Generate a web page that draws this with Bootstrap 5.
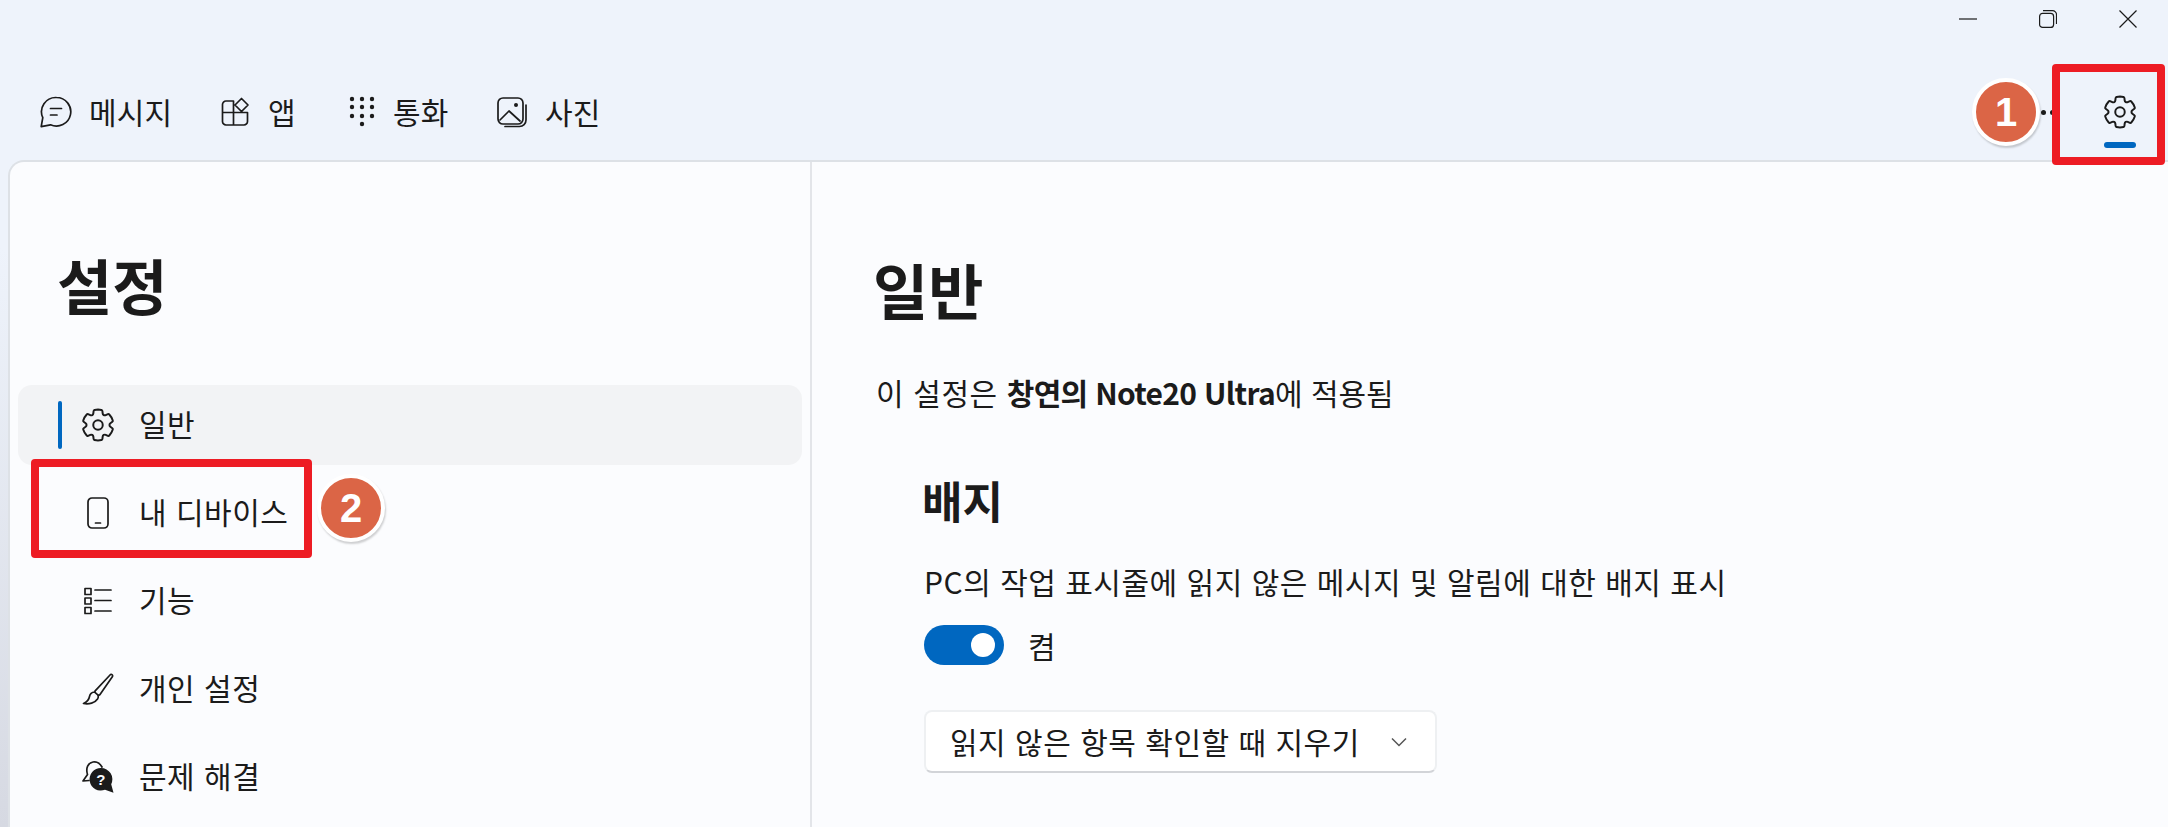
<!DOCTYPE html>
<html lang="ko">

<head>
    <meta charset="UTF-8">
    <meta name="viewport" content="width=device-width, initial-scale=1.0">
    <title>휴대폰과 연결 설정</title>
    <link href="https://cdn.jsdelivr.net/npm/bootstrap@5.3.0/dist/css/bootstrap.min.css" rel="stylesheet">
    <style>
        body {
            height: 827px;
            overflow: hidden;
            background: linear-gradient(180deg, #eef3fb 0%, #eef3fb 30%, #d6d9e2 100%);
            color: #1b1b1b;
            font-family: "Noto Sans CJK KR", "Noto Sans", sans-serif;
            font-size: 30px;
            letter-spacing: .5px;
        }

        svg { display: block; flex: none; }

        .line-icon {
            fill: none;
            stroke: #1b1b1b;
            stroke-width: 1.7;
            stroke-linecap: round;
            stroke-linejoin: round;
        }
        .gear-line { stroke-width: 1.25; }

        /* Title bar */
        .win-bar { height: 64px; padding-right: 31px; gap: 62px; }
        .win-bar svg { margin-top: 10px; }

        /* Top tabs */
        .tab-bar { height: 96px; padding-left: 40px; }
        .tab-item { color: #1b1b1b; text-decoration: none; line-height: 32px; gap: 17px; letter-spacing: .1px; }
        .tab-item span { margin-top: -2px; }
        .tab-msg { width: 179px; }
        .tab-app { width: 125px; }
        .tab-call { width: 152px; }
        .gear-tab { width: 96px; height: 96px; }
        .gear-bar {
            position: absolute;
            left: 32px;
            top: 78px;
            width: 32px;
            height: 6px;
            border-radius: 3px;
            background: #0067c0;
        }
        .more-dots { margin-right: 17px; }
        .more-dots span {
            display: block;
            width: 5px;
            height: 5px;
            border-radius: 50%;
            background: #1b1b1b;
        }

        /* Annotations */
        .red-mark {
            position: absolute;
            border: 8px solid #ed1c24;
            border-radius: 4px;
            pointer-events: none;
        }
        .red-mark-gear { right: 3px; top: 0; width: 113px; height: 101px; }
        .red-mark-device { left: 13px; top: -14px; width: 281px; height: 99px; }
        .step-badge {
            position: absolute;
            width: 68px;
            height: 68px;
            border-radius: 50%;
            background: #db6546;
            border: 4px solid #fff;
            box-shadow: 1px 2px 2px rgba(0, 0, 0, .18);
            color: #fff;
            font: 700 40px/60px "Liberation Sans", sans-serif;
            letter-spacing: 0;
            text-align: center;
        }
        .step-gear { right: 128px; top: 14px; }
        .step-device { left: 299px; top: 1px; }

        /* Main panel */
        .main-panel {
            margin-left: 8px;
            height: 667px;
            background: #fbfcfe;
            border-top: 2px solid #dde1e6;
            border-left: 2px solid #dde1e6;
            border-top-left-radius: 16px;
        }
        .side-col {
            width: 802px;
            flex: none;
            border-right: 2px solid #e3e5e9;
            padding: 86px 8px 0;
        }
        .page-title {
            font-size: 60px;
            font-weight: 700;
            line-height: 72px;
            letter-spacing: 0;
            margin: 0;
        }
        .side-col .page-title { margin: 0 0 65px 39px; }
        .side-item {
            height: 80px;
            margin-bottom: 8px;
            padding-left: 64px;
            border-radius: 14px;
            color: #1b1b1b;
            text-decoration: none;
            gap: 25px;
        }
        .side-item span { margin-top: -3px; }
        .side-item.is-active { background: #f2f3f5; }
        .side-item.is-active::before {
            content: "";
            position: absolute;
            left: 40px;
            top: 16px;
            width: 4px;
            height: 48px;
            border-radius: 2px;
            background: #0067c0;
        }
        .side-icon { width: 32px; height: 32px; }
        .gear-size { width: 38px; height: 38px; margin: 0 -3px; }

        .content-col { padding: 91px 0 0 61px; }
        .applies-line { margin: 47px 0 0 3px; line-height: 40px; letter-spacing: .6px; }
        .applies-line b { letter-spacing: -.7px; }
        .applies-line span { letter-spacing: 0; }
        .badge-block { margin: 62px 0 0 49px; }
        .block-title { font-size: 44px; font-weight: 700; line-height: 53px; letter-spacing: 0; margin: 0; }
        .block-text { margin: 34px 0 0 2px; line-height: 40px; }

        .switch-line { margin: 24px 0 0 2px; height: 40px; gap: 24px; }
        .switch-line .form-switch .form-check-input,
        .switch-line .form-switch .form-check-input:checked {
            width: 80px;
            height: 40px;
            margin: 0;
            float: none;
            background-color: #0067c0;
            border: 0;
            background-size: 32px 32px;
            background-position: right 5px center;
        }
        .switch-line .form-check { padding: 0; margin: 0; min-height: 0; line-height: 0; }

        .pick-btn {
            margin: 45px 0 0 2px;
            width: 513px;
            height: 63px;
            padding: 0 27px 0 24px;
            background: #fff;
            border: 2px solid #eef0f2;
            border-bottom-color: #d2d4d8;
            border-radius: 8px;
            color: #1b1b1b;
            font-size: 30px;
            letter-spacing: .5px;
            white-space: nowrap;
        }
    </style>
</head>

<body>
    <svg width="0" height="0" style="position:absolute">
        <symbol id="ic-gear" viewBox="0 0 24 24">
            <path class="line-icon gear-line" d="M12.012 2.25c.734.008 1.465.093 2.182.253a.75.75 0 0 1 .582.649l.17 1.527a1.384 1.384 0 0 0 1.927 1.116l1.401-.615a.75.75 0 0 1 .85.174 9.792 9.792 0 0 1 2.204 3.792.75.75 0 0 1-.271.825l-1.242.916a1.381 1.381 0 0 0 0 2.226l1.243.915a.75.75 0 0 1 .272.826 9.797 9.797 0 0 1-2.204 3.792.75.75 0 0 1-.848.175l-1.407-.617a1.38 1.38 0 0 0-1.926 1.114l-.169 1.526a.75.75 0 0 1-.572.647 9.518 9.518 0 0 1-4.406 0 .75.75 0 0 1-.572-.647l-.168-1.524a1.382 1.382 0 0 0-1.926-1.11l-1.406.616a.75.75 0 0 1-.849-.175 9.798 9.798 0 0 1-2.204-3.796.75.75 0 0 1 .272-.826l1.243-.916a1.38 1.38 0 0 0 0-2.226l-1.243-.914a.75.75 0 0 1-.271-.826 9.793 9.793 0 0 1 2.204-3.792.75.75 0 0 1 .85-.174l1.4.615a1.387 1.387 0 0 0 1.93-1.118l.17-1.526a.75.75 0 0 1 .583-.65c.717-.159 1.45-.243 2.201-.252Z" />
            <circle class="line-icon gear-line" cx="12" cy="12" r="3" />
        </symbol>
    </svg>

    <!-- Window buttons -->
    <div class="win-bar d-flex justify-content-end">
        <svg width="18" height="18" viewBox="0 0 18 18"><path d="M0 9h18" stroke="#1b1b1b" stroke-width="1.2" /></svg>
        <svg width="18" height="18" viewBox="0 0 18 18" fill="none" stroke="#1b1b1b" stroke-width="1.2"><rect x=".6" y="3.4" width="14" height="14" rx="3" /><path d="M4 .7h9.5a4 4 0 0 1 4 4V14" /></svg>
        <svg width="18" height="18" viewBox="0 0 18 18"><path d="M.5.5l17 17M17.500.5l-17 17" stroke="#1b1b1b" stroke-width="1.2" /></svg>
    </div>

    <!-- Top tabs -->
    <nav class="tab-bar d-flex align-items-center position-relative">
        <a class="tab-item tab-msg d-flex align-items-center" href="#">
            <svg width="32" height="32" viewBox="0 0 32 32"><path class="line-icon" d="M16.500 1.500a14.300 14.300 0 1 1-6 27.300L1.200 30.700l1.600-9A14.300 14.300 0 0 1 16.500 1.500Z" /><path class="line-icon" d="M10.500 12.500h11M10.500 19h6.500" /></svg>
            <span>메시지</span>
        </a>
        <a class="tab-item tab-app d-flex align-items-center" href="#">
            <svg width="32" height="32" viewBox="0 0 32 32"><path class="line-icon" d="M7 5h7.500v11.500H3.500V8.500A3.500 3.500 0 0 1 7 5ZM3.500 16.500h11V29H7a3.500 3.500 0 0 1-3.500-3.500ZM14.500 16.500H28.500v9A3.500 3.500 0 0 1 25 29H14.500ZM22.500 2.500l6.500 6.500-6.500 6.500-6.500-6.500Z" /></svg>
            <span>앱</span>
        </a>
        <a class="tab-item tab-call d-flex align-items-center" href="#">
            <svg width="32" height="32" viewBox="0 0 32 32" fill="#1b1b1b"><circle cx="8" cy="3" r="2.200" /><circle cx="18" cy="3" r="2.200" /><circle cx="28" cy="3" r="2.200" /><circle cx="8" cy="11" r="2.200" /><circle cx="18" cy="11" r="2.200" /><circle cx="28" cy="11" r="2.200" /><circle cx="8" cy="20" r="2.200" /><circle cx="18" cy="20" r="2.200" /><circle cx="28" cy="20" r="2.200" /><circle cx="18" cy="28" r="2.200" /></svg>
            <span>통화</span>
        </a>
        <a class="tab-item d-flex align-items-center" href="#">
            <svg width="32" height="32" viewBox="0 0 32 32"><rect class="line-icon" x="2" y="2" width="25" height="26" rx="5" /><path class="line-icon" d="M4 24l9-9 11 10M30 9v15a6.500 6.500 0 0 1-6.500 6.500H9" /><circle cx="20" cy="9" r="2" fill="#1b1b1b" /></svg>
            <span>사진</span>
        </a>
        <div class="ms-auto d-flex align-items-center">
            <div class="more-dots d-flex gap-1"><span></span><span></span><span></span></div>
            <a class="gear-tab d-flex align-items-center justify-content-center position-relative" href="#">
                <svg width="38" height="38"><use href="#ic-gear" /></svg>
                <span class="gear-bar"></span>
            </a>
        </div>
        <div class="red-mark red-mark-gear"></div>
        <div class="step-badge step-gear">1</div>
    </nav>

    <!-- Settings panel -->
    <main class="main-panel d-flex">
        <aside class="side-col">
            <h1 class="page-title">설정</h1>
            <div class="d-flex flex-column">
                <a class="side-item is-active d-flex align-items-center position-relative" href="#">
                    <svg class="gear-size"><use href="#ic-gear" /></svg>
                    <span>일반</span>
                </a>
                <a class="side-item d-flex align-items-center position-relative" href="#">
                    <svg class="side-icon" viewBox="0 0 32 32"><rect class="line-icon" x="6" y="1" width="20" height="30" rx="4" /><path class="line-icon" d="M13.500 26h5" /></svg>
                    <span>내 디바이스</span>
                    <div class="red-mark red-mark-device"></div>
                    <div class="step-badge step-device">2</div>
                </a>
                <a class="side-item d-flex align-items-center position-relative" href="#">
                    <svg class="side-icon" viewBox="0 0 32 32"><path class="line-icon" d="M3 3.500h6v6H3ZM3 13h6v6H3ZM3 22.500h6v6H3ZM13 5h16M13 15.500h16M13 26h16" /></svg>
                    <span>기능</span>
                </a>
                <a class="side-item d-flex align-items-center position-relative" href="#">
                    <svg class="side-icon" viewBox="0 0 32 32"><path class="line-icon" d="M28.500 1.500c1.300-.6 2.500.6 2 2L18 21.500c-.5.7-1.500.8-2.200.3l-2.300-2c-.7-.6-.7-1.500-.1-2.200ZM12.500 19c-3 .3-4.500 2-5 4.500-.5 3-2.500 5.500-6 7 5.500 1 11.500-.5 14-4.500 1-1.700 1-2.500.5-3.500" /></svg>
                    <span>개인 설정</span>
                </a>
                <a class="side-item d-flex align-items-center position-relative" href="#">
                    <svg class="side-icon" viewBox="0 0 32 32"><path class="line-icon" d="M20 6C18 2 14 .5 11 1 6 2 3.500 7 5.500 13.500L1 20l6-.5" /><path d="M19 7a11.300 11.300 0 1 0 4 21.800l8.500 3-2.300-8.500A11.300 11.300 0 0 0 19 7Z" fill="#1b1b1b" /><text x="19" y="24" text-anchor="middle" fill="#fbfcfe" font-family="Liberation Sans" font-weight="700" font-size="15">?</text></svg>
                    <span>문제 해결</span>
                </a>
            </div>
        </aside>
        <section class="content-col flex-grow-1">
            <h2 class="page-title">일반</h2>
            <p class="applies-line">이 설정은 <b>창연의 Note20 Ultra</b><span>에 적용됨</span></p>
            <div class="badge-block">
                <h3 class="block-title">배지</h3>
                <p class="block-text mb-0">PC의 작업 표시줄에 읽지 않은 메시지 및 알림에 대한 배지 표시</p>
                <div class="switch-line d-flex align-items-center">
                    <div class="form-check form-switch">
                        <input class="form-check-input" type="checkbox" role="switch" checked>
                    </div>
                    <span>켬</span>
                </div>
                <button class="pick-btn btn d-flex align-items-center justify-content-between" type="button">
                    <span>읽지 않은 항목 확인할 때 지우기</span>
                    <svg width="18" height="18" viewBox="0 0 18 18"><path d="M2 5.500l7 7 7-7" fill="none" stroke="#555" stroke-width="1.500" /></svg>
                </button>
            </div>
        </section>
    </main>

    <script src="https://cdn.jsdelivr.net/npm/bootstrap@5.3.0/dist/js/bootstrap.bundle.min.js"></script>
</body>

</html>
